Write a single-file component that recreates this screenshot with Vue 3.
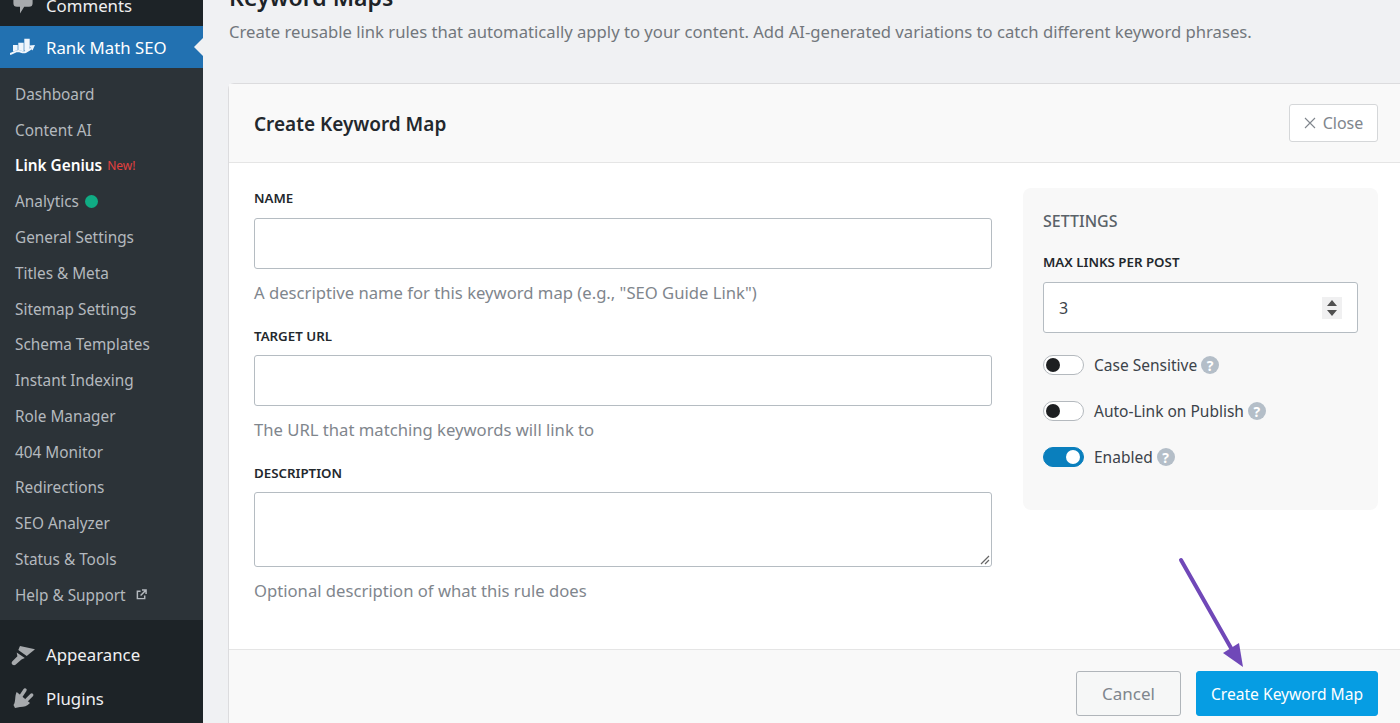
<template>
  <div class="page">
    <aside class="sidebar">
      <div class="top-item comments">
        <svg class="menu-icon" viewBox="0 0 20 20"><path d="M5 0h10a3 3 0 0 1 3 3v5.500a3 3 0 0 1-3 3h-4L7.500 17v-5.500H5a3 3 0 0 1-3-3V3a3 3 0 0 1 3-3z" /></svg>
        <span>Comments</span>
      </div>
      <div class="top-item current">
        <svg class="menu-icon logo" viewBox="0 0 26 20">
          <path d="M3 8h4.700v5.200L3 14.500zM8.300 5.700h5.400v8.500l-5.400-1zM14.300 1.700h5.400V13l-3 1.400-2.400-.8z" />
          <path d="M0 17c3-.8 5.500-3 8.500-3 2.500.3 4.500 2.200 7 1l6-3.500" fill="none" stroke="#f0f6fc" stroke-width="2" />
          <path d="M19 8.500l6-.500-2.500 5.500z" />
        </svg>
        <span>Rank Math SEO</span>
      </div>
      <ul class="submenu">
        <li v-for="item in submenu" :key="item.label" :class="{ active: item.active }">
          <span>{{ item.label }}</span>
          <em v-if="item.active" class="new">New!</em>
          <i v-if="item.dot" class="dot"></i>
          <svg v-if="item.external" class="ext" viewBox="0 0 12 12"><path d="M5 2.500H1.500v8h8V7M6.500 1h4.500v4.500M11 1 5 7" fill="none" stroke="currentColor" stroke-width="1.600" /></svg>
        </li>
      </ul>
      <div class="top-item">
        <svg class="menu-icon" viewBox="0 0 24 24">
          <path d="M9 3 24 6.300 15.700 13 7.300 7z" />
          <path d="M5.700 9.500 13.800 15l-3.300 1.500-6 5.300c-1 .8-2.300.5-3.200-.3-.9-1-.8-2.200.1-3.200l5-5z" />
        </svg>
        <span>Appearance</span>
      </div>
      <div class="top-item">
        <svg class="menu-icon" viewBox="0 0 24 24">
          <path d="M5.700 5 19 16c-3 3-6 4-10 4l-5 1-1.500-3c2.500-3 1-9 3.200-13z" />
          <path d="M14 3l-4 6M20.700 8l-5 5" fill="none" stroke="#a7aaad" stroke-width="3.400" stroke-linecap="round" />
        </svg>
        <span>Plugins</span>
      </div>
    </aside>

    <main class="content">
      <h1>Keyword Maps</h1>
      <p class="intro">Create reusable link rules that automatically apply to your content. Add AI-generated variations to catch different keyword phrases.</p>

      <section class="card">
        <header class="card-head">
          <h2>Create Keyword Map</h2>
          <button class="close">
            <svg viewBox="0 0 12 12"><path d="M1 1l10 10M11 1 1 11" fill="none" stroke="currentColor" stroke-width="1.100" /></svg>
            Close
          </button>
        </header>

        <div class="card-body">
          <div class="fields">
            <label>NAME</label>
            <div class="input"></div>
            <p class="hint">A descriptive name for this keyword map (e.g., "SEO Guide Link")</p>
            <label>TARGET URL</label>
            <div class="input"></div>
            <p class="hint">The URL that matching keywords will link to</p>
            <label>DESCRIPTION</label>
            <div class="input area">
              <svg class="grip" viewBox="0 0 10 10"><path d="M1 9 9 1M5 9l4-4" fill="none" stroke="#666" stroke-width="1.200" /></svg>
            </div>
            <p class="hint">Optional description of what this rule does</p>
          </div>

          <div class="settings">
            <h3>SETTINGS</h3>
            <label>MAX LINKS PER POST</label>
            <div class="input number">
              <span>3</span>
              <span class="spinner">
                <svg viewBox="0 0 20 22"><path d="M10 3l5 6H5zM10 19l-5-6h10z" fill="#505050" /></svg>
              </span>
            </div>
            <div v-for="t in toggles" :key="t.label" class="toggle-row">
              <span class="toggle" :class="{ on: t.on }"><i></i></span>
              <span class="toggle-label">{{ t.label }}</span>
              <span class="help">?</span>
            </div>
          </div>
        </div>

        <footer class="card-foot">
          <button class="cancel">Cancel</button>
          <button class="primary">Create Keyword Map</button>
        </footer>
      </section>

      <svg class="arrow" viewBox="0 0 80 120" width="80" height="120">
        <path d="M5 4 L55 92" stroke="#7048b8" stroke-width="4" stroke-linecap="round" fill="none" />
        <path d="M67 111 L47 97 L63 87 Z" fill="#7048b8" />
      </svg>
    </main>
  </div>
</template>

<script setup>
const submenu = [
  { label: 'Dashboard' },
  { label: 'Content AI' },
  { label: 'Link Genius', active: true },
  { label: 'Analytics', dot: true },
  { label: 'General Settings' },
  { label: 'Titles & Meta' },
  { label: 'Sitemap Settings' },
  { label: 'Schema Templates' },
  { label: 'Instant Indexing' },
  { label: 'Role Manager' },
  { label: '404 Monitor' },
  { label: 'Redirections' },
  { label: 'SEO Analyzer' },
  { label: 'Status & Tools' },
  { label: 'Help & Support', external: true },
]

const toggles = [
  { label: 'Case Sensitive', on: false },
  { label: 'Auto-Link on Publish', on: false },
  { label: 'Enabled', on: true },
]
</script>

<style>
html, body {
  margin: 0;
  height: 723px;
  overflow: hidden;
  background: #f0f0f1;
}
</style>

<style scoped>
.page {
  display: flex;
  height: 723px;
  overflow: hidden;
  font-family: "Noto Sans", "Open Sans", sans-serif;
  background: #f0f1f3;
  color: #1d2327;
}

/* sidebar */
.sidebar {
  flex: 0 0 203px;
  background: #1d2327;
  color: #f0f0f1;
}
.top-item {
  display: flex;
  align-items: center;
  height: 44px;
  padding-left: 11px;
  font-size: 16.8px;
}
.comments {
  height: 40px;
  margin-top: -15px;
  margin-bottom: 1px;
}
.menu-icon {
  width: 24px;
  height: 24px;
  margin-right: 11px;
  fill: #a7aaad;
  flex: none;
}
.current {
  position: relative;
  height: 42px;
  background: #2271b1;
  color: #fff;
}
.current::after {
  content: "";
  position: absolute;
  right: 0;
  top: 50%;
  margin-top: -9px;
  border: 9px solid transparent;
  border-right-color: #f0f1f3;
  border-left-width: 0;
}
.logo {
  width: 26px;
  height: 20px;
  margin-left: -1px;
  margin-right: 10px;
  fill: #f0f6fc;
}
.submenu {
  list-style: none;
  margin: 0 0 13px;
  padding: 8px 0 7px;
  background: #2c3338;
  font-size: 15.35px;
}
.submenu li {
  display: flex;
  align-items: center;
  height: 35.79px;
  padding-left: 15px;
  color: #b4b9be;
}
.submenu li.active {
  color: #fff;
  font-weight: 600;
}
.new {
  margin-left: 5px;
  font-style: normal;
  font-weight: 400;
  font-size: 12px;
  color: #e2403f;
}
.dot {
  width: 13px;
  height: 13px;
  margin-left: 6px;
  border-radius: 50%;
  background: #10ac84;
}
.ext {
  width: 11px;
  height: 11px;
  margin-left: 10px;
}

/* main */
.content {
  position: relative;
  flex: 1;
  min-width: 0;
  padding-left: 26px;
}
h1 {
  margin: -19px 0 0;
  font-size: 23px;
  line-height: 32px;
  font-weight: 600;
  color: #1d2327;
}
.intro {
  margin: 6px 0 0;
  font-size: 16.65px;
  line-height: 26px;
  color: #72777c;
  white-space: nowrap;
}
.card {
  width: 1176px;
  margin-top: 38px;
  margin-left: -1px;
  box-sizing: border-box;
  background: #fff;
  border: 1px solid #dcdcde;
  border-radius: 6px 0 0 0;
  border-right: 0;
}
.card-head {
  display: flex;
  align-items: center;
  justify-content: space-between;
  height: 79px;
  box-sizing: border-box;
  padding: 0 26px 0 25px;
  background: #f9f9f9;
  border-bottom: 1px solid #e5e5e5;
}
.card-head h2 {
  margin: 1px 0 0;
  font-size: 19px;
  font-weight: 600;
  color: #23282d;
}
.close {
  display: flex;
  align-items: center;
  gap: 7px;
  width: 89px;
  height: 38px;
  justify-content: center;
  padding: 0;
  font: inherit;
  font-size: 16px;
  color: #7f868d;
  background: #fff;
  border: 1px solid #d5d7d9;
  border-radius: 3px;
}
.close svg {
  width: 12px;
  height: 12px;
}
.card-body {
  display: flex;
  height: 486px;
  padding: 0 25px;
}
.fields {
  width: 738px;
  margin-right: 31px;
  padding-top: 24px;
}
label {
  display: block;
  font-size: 13.3px;
  line-height: 22px;
  font-weight: 600;
  color: #23282d;
}
.input {
  position: relative;
  box-sizing: border-box;
  height: 51px;
  margin-top: 9px;
  background: #fff;
  border: 1px solid #b5bcc2;
  border-radius: 3px;
}
.hint + label + .input {
  margin-top: 8px;
}
.area {
  height: 75px;
}
.grip {
  position: absolute;
  right: 1px;
  bottom: 1px;
  width: 10px;
  height: 10px;
}
.hint {
  margin: 11px 0 20px;
  font-size: 16.65px;
  line-height: 25px;
  color: #7f868d;
}
.settings {
  box-sizing: border-box;
  width: 355px;
  height: 322px;
  margin-top: 25px;
  padding: 21px 20px 0;
  background: #f8f8f8;
  border-radius: 8px;
}
.settings h3 {
  margin: 0 0 19px;
  font-size: 16px;
  line-height: 24px;
  font-weight: 500;
  color: #5a6268;
}
.settings label {
  line-height: 20px;
}
.number {
  display: flex;
  align-items: center;
  justify-content: space-between;
  margin: 10px 0 22px;
  padding: 0 15px;
  font-size: 16px;
  color: #3c434a;
}
.spinner {
  display: flex;
  width: 20px;
  height: 22px;
  background: #f0f0f1;
}
.toggle-row {
  display: flex;
  align-items: center;
  height: 20px;
  margin-bottom: 26px;
}
.toggle {
  position: relative;
  box-sizing: border-box;
  width: 41px;
  height: 20px;
  background: #fff;
  border: 1px solid #b4b9be;
  border-radius: 10px;
}
.toggle i {
  position: absolute;
  top: 2px;
  left: 2px;
  width: 14px;
  height: 14px;
  border-radius: 50%;
  background: #1d1f21;
}
.toggle.on {
  background: #0a7fbd;
  border-color: #0a7fbd;
}
.toggle.on i {
  left: 22px;
  background: #fff;
}
.toggle-label {
  margin-left: 10px;
  font-size: 15.5px;
  color: #3c434a;
}
.help {
  display: flex;
  align-items: center;
  justify-content: center;
  width: 18px;
  height: 18px;
  margin-left: 4px;
  border-radius: 50%;
  background: #b4bec8;
  color: #fff;
  font-size: 14px;
  font-weight: 700;
}
.card-foot {
  display: flex;
  justify-content: flex-end;
  gap: 15px;
  box-sizing: border-box;
  height: 90px;
  padding: 21px 26px 0 0;
  background: #f9f9f9;
  border-top: 1px solid #e5e5e5;
}
.card-foot button {
  height: 45px;
  padding: 0;
  font: inherit;
  font-size: 15.6px;
  border-radius: 3px;
}
.card-foot .cancel {
  width: 105px;
  font-size: 17px;
  color: #7f868d;
  background: #f6f7f7;
  border: 1px solid #b0b5ba;
}
.primary {
  width: 182px;
  color: #fff;
  background: #069de3;
  border: 1px solid #069de3;
}
.arrow {
  position: absolute;
  left: 973px;
  top: 556px;
}
</style>
